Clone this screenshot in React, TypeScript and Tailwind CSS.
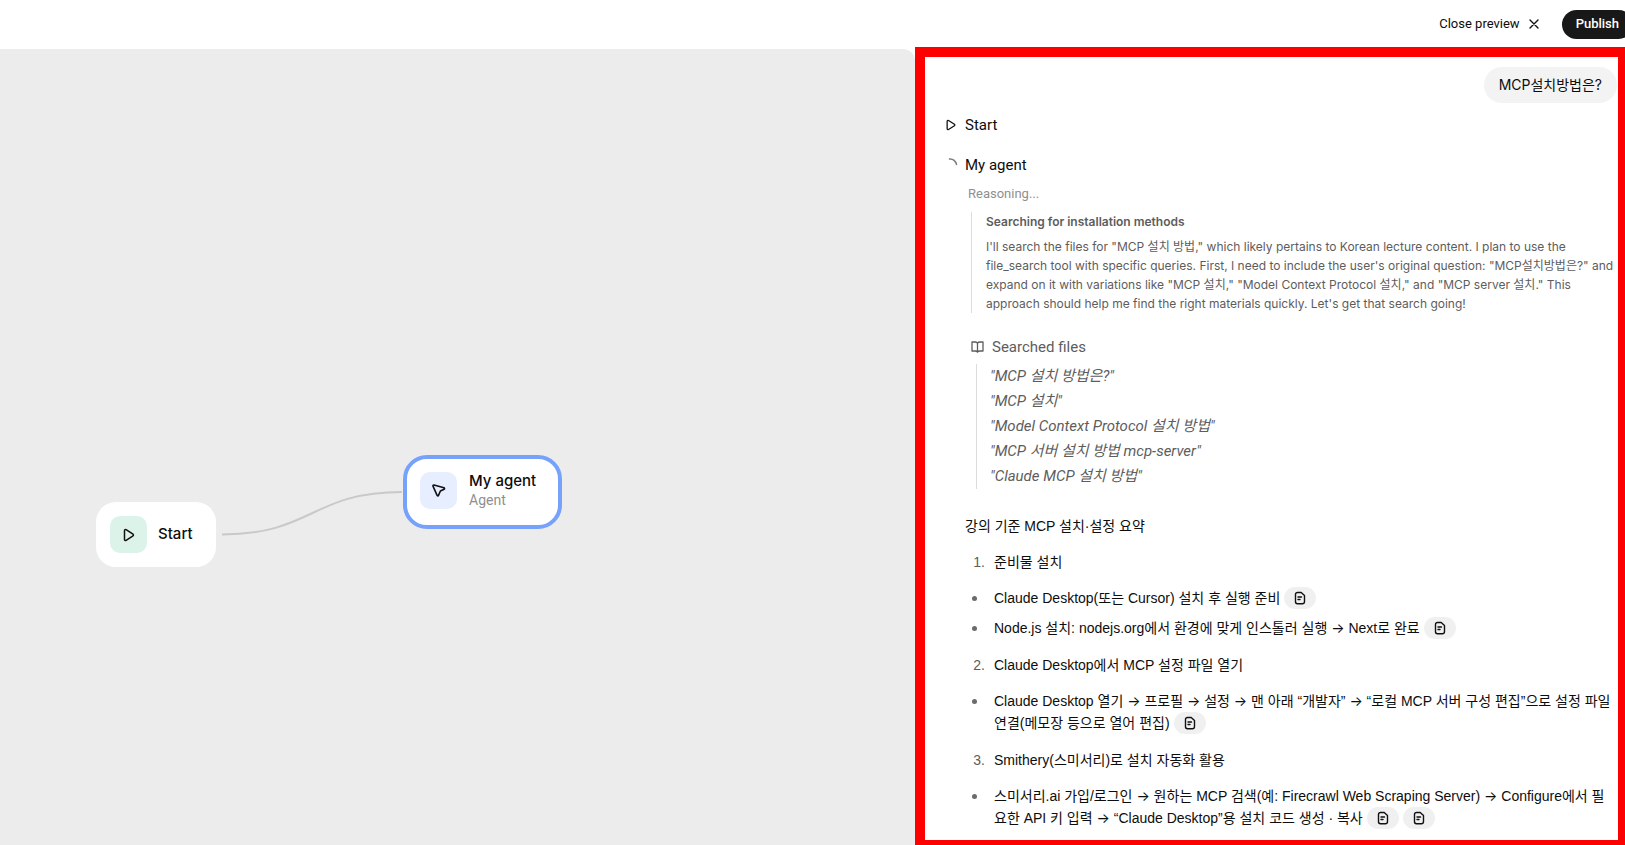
import type { ReactNode } from 'react';

const PlayIcon = ({ size = 14 }: { size?: number }) => (
    <svg width={size} height={size} viewBox="0 0 14 14" fill="none" stroke="#111" strokeWidth={1.5} strokeLinejoin="round" className="shrink-0">
        <path d="M2.5 2.6v8.8c0 .8.9 1.3 1.6.9l6.9-4.400c.6-.4.6-1.3 0-1.7L4.100 1.7c-.7-.4-1.6.1-1.6.9Z" />
    </svg>
);

const AgentIcon = () => (
    <svg width="16" height="16" viewBox="0 0 16 16" fill="none" stroke="#111" strokeWidth={1.6} strokeLinejoin="round" className="shrink-0">
        <path d="M3 2.1l10 2.7c.7.2.7 1.1.1 1.4L9.4 8 7.5 12.4c-.3.7-1.2.6-1.4-.1L2 3.2c-.3-.7.3-1.3 1-1.1Z" />
    </svg>
);

const BookIcon = () => (
    <svg width="14" height="14" viewBox="0 0 14 14" fill="none" stroke="#5d5d5d" strokeWidth={1.3} strokeLinejoin="round" className="shrink-0">
        <path d="M6.5 3.2C5.9 2.4 5 2 4 2H1v9h3.3c1 0 1.7.4 2.2 1.1.5-.7 1.3-1.1 2.2-1.1H12V2H9c-1 0-1.9.4-2.5 1.2Zm0 0v8.9" />
    </svg>
);

const Spinner = () => (
    <svg width="14" height="14" viewBox="0 0 14 14" fill="none" strokeWidth={1.5} strokeLinecap="round" className="shrink-0">
        <path d="M4.5 1C8 .5 11 3.5 11.5 6.5" stroke="#7d7d7d" />
    </svg>
);

const Cite = () => (
    <button type="button" aria-label="Source file" className="ml-1 inline-flex h-[22px] w-8 items-center justify-center rounded-full bg-[#f0f0f0] align-top">
        <svg width="14" height="14" viewBox="0 0 14 14" fill="none" stroke="#111" strokeWidth={1.4} strokeLinecap="round" strokeLinejoin="round">
            <path d="M4.5 1.5h3.7L11.5 4.5v6a2.2 2.2 0 0 1-2.2 2.2H4.5a2 2 0 0 1-2-2V3.5a2 2 0 0 1 2-2ZM5 6h3.5M5 8.5h2" />
        </svg>
    </button>
);

const Arrow = () => <span className="font-[Inter,sans-serif]">→</span>;

const queries = ['MCP 설치 방법은?', 'MCP 설치', 'Model Context Protocol 설치 방법', 'MCP 서버 설치 방법 mcp-server', 'Claude MCP 설치 방법'];

const Step = ({ n, children }: { n: number; children: ReactNode }) => (
    <ol start={n}>
        <li className="flex gap-[9px]">
            <span className="w-5 shrink-0 text-right text-[#5d5d5d]">{n}.</span>
            <span>{children}</span>
        </li>
    </ol>
);

const Bullets = ({ children }: { children: ReactNode }) => <ul className="mb-px flex flex-col gap-2">{children}</ul>;

const Bullet = ({ children }: { children: ReactNode }) => (
    <li className="flex gap-[17px]">
        <span className="mt-[9px] ml-[7px] size-[5px] shrink-0 rounded-full bg-[#6b6b6b]" />
        <span className="whitespace-nowrap">{children}</span>
    </li>
);

export default function App() {
    return (
        <div className="flex h-screen flex-col overflow-hidden bg-white font-[Roboto,'Noto_Sans_CJK_KR',sans-serif] text-[#0d0d0d]">
            <header className="flex h-[47px] shrink-0 items-center justify-end gap-[22px] pt-px text-[13px]">
                <button type="button" className="flex items-center gap-2">
                    Close preview
                    <svg width="12" height="12" viewBox="0 0 12 12" stroke="#111" strokeWidth={1.4} strokeLinecap="round">
                        <path d="M2 2l8 8M10 2l-8 8" />
                    </svg>
                </button>
                <button type="button" className="-mr-2 h-[29px] rounded-full bg-[#181818] px-[14px] font-medium text-white">
                    Publish
                </button>
            </header>

            <div className="flex min-h-0 flex-1">
                <main className="relative mt-[2px] flex-1 overflow-hidden rounded-tr-xl bg-[#ececec]">
                    <svg className="absolute top-[435px] left-[220px]" width="184" height="60" fill="none" stroke="#c9c9c9" strokeWidth={2}>
                        <path d="M2 50.5C92 50.5 92 8 182 8" />
                    </svg>
                    <div className="absolute top-[453px] left-24 flex h-[65px] w-[120px] items-center gap-[11px] rounded-[20px] bg-white pl-[14px] font-[Inter,sans-serif] text-[15px] font-medium">
                        <span className="flex size-[37px] items-center justify-center rounded-[10px] bg-[#dcf3ea]">
                            <PlayIcon />
                        </span>
                        Start
                    </div>
                    <div className="absolute top-[406px] left-[403px] flex h-[74px] w-[159px] gap-3 rounded-3xl border-4 border-[#76a2fb] bg-white pt-[13px] pl-[13px]">
                        <span className="flex size-[37px] items-center justify-center rounded-[10px] bg-[#e7eeff]">
                            <AgentIcon />
                        </span>
                        <div>
                            <p className="font-[Inter,sans-serif] text-[15px] leading-[18px] font-medium">My agent</p>
                            <p className="text-sm text-[#8f8f8f]">Agent</p>
                        </div>
                    </div>
                </main>

                <section className="w-[710px] shrink-0 overflow-hidden border-t-[10px] border-r-[7px] border-b-[5px] border-l-[10px] border-[#ff0000] pl-5 text-[15px] leading-[22px]">
                    <div className="mt-[10px] mr-px ml-auto flex h-9 w-fit items-center rounded-full bg-[#f3f3f3] px-[15px] font-[Inter,'Noto_Sans_CJK_KR',sans-serif] text-sm">
                        MCP설치방법은?
                    </div>
                    <div className="mt-[11px] flex items-center gap-2">
                        <PlayIcon size={12} />
                        Start
                    </div>
                    <div className="mt-[18px] flex items-center gap-[6px]">
                        <Spinner />
                        My agent
                    </div>

                    <div className="mr-2 pl-5">
                        <p className="mt-[7px] ml-[3px] text-[13px] text-[#8f8f8f]">Reasoning...</p>
                        <div className="mt-[7px] ml-[6px] border-l border-[#dcdcdc] pl-[14px] font-[Inter,'Noto_Sans_CJK_KR',sans-serif] text-xs leading-[19px] whitespace-nowrap text-[#5d5d5d]">
                            <p className="font-semibold">Searching for installation methods</p>
                            <p className="mt-[6px]">
                                I'll search the files for "MCP 설치 방법," which likely pertains to Korean lecture content. I plan to use the
                                <br />
                                file_search tool with specific queries. First, I need to include the user's original question: "MCP설치방법은?" and
                                <br />
                                expand on it with variations like "MCP 설치," "Model Context Protocol 설치," and "MCP server 설치." This
                                <br />
                                approach should help me find the right materials quickly. Let's get that search going!
                            </p>
                        </div>
                        <div className="mt-[23px] ml-[6px] flex items-center gap-[7px] text-[#5d5d5d]">
                            <BookIcon />
                            Searched files
                        </div>
                        <ul className="mt-[6px] ml-[11px] border-l border-[#dcdcdc] pl-[13px] leading-[25px] text-[#5d5d5d] italic">
                            {queries.map((q) => (
                                <li key={q}>"{q}"</li>
                            ))}
                        </ul>
                    </div>

                    <div className="flex flex-col gap-[14px] pl-5 font-['Liberation_Sans','Noto_Sans_CJK_KR',sans-serif] text-sm leading-[22px]">
                        <h2 className="mt-[26px]">강의 기준 MCP 설치·설정 요약</h2>
                        <Step n={1}>준비물 설치</Step>
                        <Bullets>
                            <Bullet>
                                Claude Desktop(또는 Cursor) 설치 후 실행 준비
                                <Cite />
                            </Bullet>
                            <Bullet>
                                Node.js 설치: nodejs.org에서 환경에 맞게 인스톨러 실행 <Arrow /> Next로 완료
                                <Cite />
                            </Bullet>
                        </Bullets>
                        <Step n={2}>Claude Desktop에서 MCP 설정 파일 열기</Step>
                        <Bullets>
                            <Bullet>
                                Claude Desktop 열기 <Arrow /> 프로필 <Arrow /> 설정 <Arrow /> 맨 아래 “개발자” <Arrow /> “로컬 MCP 서버 구성 편집”으로 설정 파일
                                <br />
                                연결(메모장 등으로 열어 편집)
                                <Cite />
                            </Bullet>
                        </Bullets>
                        <Step n={3}>Smithery(스미서리)로 설치 자동화 활용</Step>
                        <Bullets>
                            <Bullet>
                                스미서리.ai 가입/로그인 <Arrow /> 원하는 MCP 검색(예: Firecrawl Web Scraping Server) <Arrow /> Configure에서 필
                                <br />
                                요한 API 키 입력 <Arrow /> “Claude Desktop”용 설치 코드 생성 · 복사
                                <Cite />
                                <Cite />
                            </Bullet>
                        </Bullets>
                    </div>
                </section>
            </div>
        </div>
    );
}
